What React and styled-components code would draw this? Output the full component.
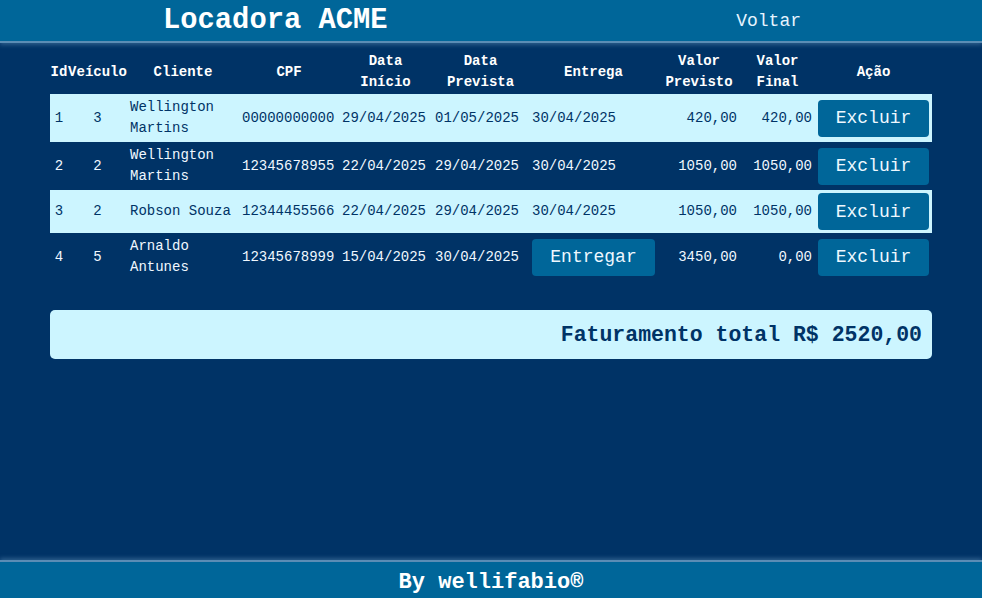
import React from 'react';
import styled, { createGlobalStyle } from 'styled-components';

const GlobalStyle = createGlobalStyle`
  html, body {
    margin: 0;
    padding: 0;
    background-color: #003366;
    font-family: "Liberation Mono", "Courier New", monospace;
  }
`;

const Page = styled.div`
  min-height: 100vh;
  display: flex;
  flex-direction: column;
`;

const Header = styled.header`
  height: 41px;
  background-color: #006699;
  border-bottom: 2px solid #5b8db5;
  box-shadow: 0 2px 4px rgba(120, 170, 210, 0.35);
  display: flex;
  align-items: center;
  justify-content: space-between;
  padding: 0 181px 0 163px;
`;

const Title = styled.h1`
  margin: 0;
  font-size: 28.8px;
  font-weight: bold;
  color: #ffffff;
`;

const NavLink = styled.a`
  font-size: 18px;
  color: #e6f4ff;
  text-decoration: none;
  cursor: pointer;
`;

const Main = styled.main`
  flex: 1;
  padding: 7px 50px 0;
`;

const Table = styled.table`
  width: 882px;
  table-layout: fixed;
  border-collapse: collapse;
  font-size: 14px;
  line-height: 21px;
`;

const Th = styled.th`
  box-sizing: border-box;
  width: ${({ w }) => w}px;
  padding: 1px ${({ tight }) => (tight ? 0 : 2)}px;
  color: #ffffff;
  font-weight: bold;
  text-align: center;
`;

const Row = styled.tr`
  background-color: ${({ light }) => (light ? '#ccf5ff' : 'transparent')};
  color: ${({ light }) => (light ? '#003366' : '#f0f8ff')};
`;

const Td = styled.td`
  padding: 3px;
  text-align: ${({ align }) => align || 'left'};
  vertical-align: middle;
  white-space: ${({ nowrap }) => (nowrap ? 'nowrap' : 'normal')};
`;

const Button = styled.button`
  display: block;
  width: 100%;
  height: 37px;
  border: none;
  border-radius: 4px;
  background-color: #006699;
  color: #eef8ff;
  font-family: inherit;
  font-size: 18px;
  cursor: pointer;

  &:hover {
    background-color: #0077aa;
  }
`;

const TotalBox = styled.div`
  margin-top: 29px;
  height: 49px;
  border-radius: 5px;
  background-color: #ccf5ff;
  color: #003366;
  display: flex;
  align-items: center;
  justify-content: flex-end;
  padding: 0 10px;
  font-size: 21.5px;
  font-weight: bold;
`;

const Footer = styled.footer`
  height: 32px;
  padding-top: 4px;
  background-color: #006699;
  border-top: 2px solid #5b8db5;
  box-shadow: 0 -2px 4px rgba(120, 170, 210, 0.35);
  display: flex;
  align-items: center;
  justify-content: center;
  color: #ffffff;
  font-size: 22px;
  font-weight: bold;
`;

const locacoes = [
  { id: 1, veiculo: 3, cliente: 'Wellington Martins', cpf: '00000000000', inicio: '29/04/2025', prevista: '01/05/2025', entrega: '30/04/2025', previsto: '420,00', final: '420,00' },
  { id: 2, veiculo: 2, cliente: 'Wellington Martins', cpf: '12345678955', inicio: '22/04/2025', prevista: '29/04/2025', entrega: '30/04/2025', previsto: '1050,00', final: '1050,00' },
  { id: 3, veiculo: 2, cliente: 'Robson Souza', cpf: '12344455566', inicio: '22/04/2025', prevista: '29/04/2025', entrega: '30/04/2025', previsto: '1050,00', final: '1050,00' },
  { id: 4, veiculo: 5, cliente: 'Arnaldo Antunes', cpf: '12345678999', inicio: '15/04/2025', prevista: '30/04/2025', entrega: null, previsto: '3450,00', final: '0,00' }
];

const App = () => {
  return (
    <Page>
      <GlobalStyle />
      <Header>
        <Title>Locadora ACME</Title>
        <NavLink href="#!">Voltar</NavLink>
      </Header>
      <Main>
        <Table>
          <thead>
            <tr>
              <Th w={18} tight>Id</Th>
              <Th w={59} tight>Veículo</Th>
              <Th w={112}>Cliente</Th>
              <Th w={100}>CPF</Th>
              <Th w={93}>Data Início</Th>
              <Th w={97}>Data Prevista</Th>
              <Th w={129}>Entrega</Th>
              <Th w={82}>Valor Previsto</Th>
              <Th w={75}>Valor Final</Th>
              <Th w={117}>Ação</Th>
            </tr>
          </thead>
          <tbody>
            {locacoes.map((l, i) => (
              <Row key={l.id} light={i % 2 === 0}>
                <Td align="center">{l.id}</Td>
                <Td align="center">{l.veiculo}</Td>
                <Td>{l.cliente}</Td>
                <Td nowrap>{l.cpf}</Td>
                <Td nowrap>{l.inicio}</Td>
                <Td nowrap>{l.prevista}</Td>
                <Td>{l.entrega ? l.entrega : <Button>Entregar</Button>}</Td>
                <Td align="right">{l.previsto}</Td>
                <Td align="right">{l.final}</Td>
                <Td><Button>Excluir</Button></Td>
              </Row>
            ))}
          </tbody>
        </Table>
        <TotalBox>Faturamento total R$ 2520,00</TotalBox>
      </Main>
      <Footer>By wellifabio®</Footer>
    </Page>
  );
};

export default App;
